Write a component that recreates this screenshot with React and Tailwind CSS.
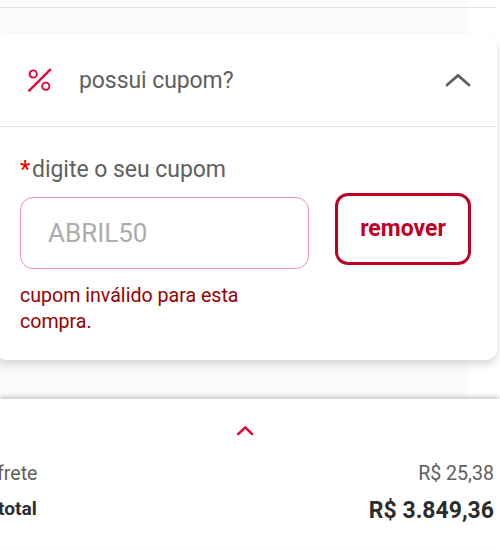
import React, { useState } from "react"

export default function App() {
    const [coupon, setCoupon] = useState("ABRIL50")
    const [open, setOpen] = useState(true)

    return (
        <div className="w-[500px] h-[549px] flex flex-col overflow-hidden bg-white font-['Roboto',sans-serif] text-[#606060]">
            {/* Checkout content */}
            <div className="h-[399px] shrink-0 flex flex-col bg-[linear-gradient(to_right,#fafafa_468px,#ffffff_468px)]">
                <div className="w-[497px] h-[34px] pt-[7px]">
                    <div className="h-px bg-[#e2e2e2]" />
                </div>

                {/* Coupon card */}
                <section className="-ml-[5px] w-[502px] h-[326px] shrink-0 rounded-[12px] bg-white shadow-[0_5px_8px_rgba(0,0,0,0.14)]">
                    <button
                        type="button"
                        onClick={() => setOpen(!open)}
                        className="w-full h-[93px] pl-[33px] pr-[26px] flex items-center border-b border-[#e2e2e2] cursor-pointer"
                    >
                        <svg width="24" height="24" viewBox="0 0 24 24" fill="none" stroke="#ea0031" className="shrink-0">
                            <path d="M1.2 22.6 22.2 1.6" strokeWidth="2.3" strokeLinecap="round" />
                            <circle cx="5.2" cy="6" r="3.6" strokeWidth="1.9" />
                            <circle cx="17.8" cy="18.2" r="3.6" strokeWidth="1.9" />
                        </svg>
                        <span className="ml-[27px] pt-px text-[23px] leading-7 tracking-[-0.08px]">possui cupom?</span>
                        <svg width="26" height="14" viewBox="0 0 26 14" fill="none" stroke="#606060" strokeWidth="2.8" strokeLinecap="round" className="ml-auto">
                            <path d="M2 12 13 2.4 24 12" />
                        </svg>
                    </button>

                    {open && (
                        <div className="pl-[25px] pt-[28px]">
                            <label htmlFor="coupon" className="flex h-[30px] text-[23px] leading-[30px] tracking-[-0.04px]">
                                <span className="w-[12px] font-medium text-[#f00000]">*</span>
                                <span>digite o seu cupom</span>
                            </label>
                            <div className="mt-[8px] flex">
                                <input
                                    id="coupon"
                                    type="text"
                                    value={coupon}
                                    onChange={(e) => setCoupon(e.target.value)}
                                    className="mt-[4px] w-[289px] h-[72px] rounded-[13px] border-[1.5px] border-[#f093a7] px-[27px] text-[26px] text-[#acacac] outline-none"
                                />
                                <button
                                    type="button"
                                    onClick={() => setCoupon("")}
                                    className="ml-[26px] w-[136px] h-[72px] rounded-[13px] border-[3px] border-[#bf0026] text-[23px] font-bold text-[#bf0026] cursor-pointer"
                                >
                                    remover
                                </button>
                            </div>
                            <p className="mt-[14px] w-[240px] text-[19.6px] leading-[26px] text-[#990000]">
                                cupom inválido para esta compra.
                            </p>
                        </div>
                    )}
                </section>
            </div>

            {/* Order totals */}
            <footer className="relative h-[150px] shrink-0 bg-white border-b-2 border-[#fafafa] shadow-[0_-2px_5px_rgba(0,0,0,0.22)]">
                <div className="h-[61px] pt-[26px] pl-[236px]">
                    <svg width="18" height="12" viewBox="0 0 18 12" fill="none" stroke="#ea0031" strokeWidth="2.5" strokeLinecap="round">
                        <path d="M2.2 9.2 9.2 2.4 16.2 9.2" />
                    </svg>
                </div>
                <div className="h-[28px] -ml-[3px] pr-[6px] flex items-center justify-between text-[19.6px]">
                    <span>frete</span>
                    <span>R$ 25,38</span>
                </div>
                <div className="h-[46px] -ml-[2px] pr-[6px] flex items-center justify-between font-bold text-[#2d2d2d]">
                    <span className="pb-[3px] text-[19.2px]">total</span>
                    <span className="text-[23px]">R$ 3.849,36</span>
                </div>
            </footer>
        </div>
    )
}
